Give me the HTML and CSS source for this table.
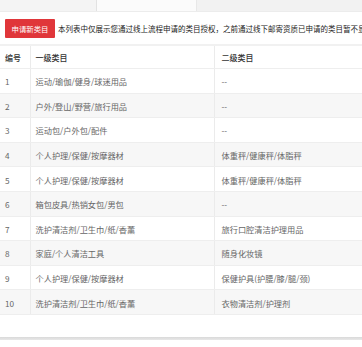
FILE: index.html
```html
<!DOCTYPE html>
<html lang="zh">
<head>
<meta charset="utf-8">
<link rel="stylesheet" href="styles.css">
</head>
<body>
<div class="page">
  <div class="topstrip">
    <div class="seg seg-a"></div>
    <div class="seg seg-b"></div>
    <div class="seg seg-c"></div>
  </div>
  <div class="toolbar">
    <button class="btn-apply">申请新类目</button>
    <span class="desc">本列表中仅展示您通过线上流程申请的类目授权，之前通过线下邮寄资质已申请的类目暂不显示</span>
  </div>
  <table class="cat-table">
    <thead>
      <tr><th class="c-no">编号</th><th class="c-l1">一级类目</th><th class="c-l2">二级类目</th></tr>
    </thead>
    <tbody>
      <tr><td class="c-no">1</td><td class="c-l1">运动/瑜伽/健身/球迷用品</td><td class="c-l2">--</td></tr>
      <tr><td class="c-no">2</td><td class="c-l1">户外/登山/野营/旅行用品</td><td class="c-l2">--</td></tr>
      <tr><td class="c-no">3</td><td class="c-l1">运动包/户外包/配件</td><td class="c-l2">--</td></tr>
      <tr><td class="c-no">4</td><td class="c-l1">个人护理/保健/按摩器材</td><td class="c-l2">体重秤/健康秤/体脂秤</td></tr>
      <tr><td class="c-no">5</td><td class="c-l1">个人护理/保健/按摩器材</td><td class="c-l2">体重秤/健康秤/体脂秤</td></tr>
      <tr><td class="c-no">6</td><td class="c-l1">箱包皮具/热销女包/男包</td><td class="c-l2">--</td></tr>
      <tr><td class="c-no">7</td><td class="c-l1">洗护清洁剂/卫生巾/纸/香薰</td><td class="c-l2">旅行口腔清洁护理用品</td></tr>
      <tr><td class="c-no">8</td><td class="c-l1">家庭/个人清洁工具</td><td class="c-l2">随身化妆镜</td></tr>
      <tr><td class="c-no">9</td><td class="c-l1">个人护理/保健/按摩器材</td><td class="c-l2">保健护具(护腰/膝/腿/颈)</td></tr>
      <tr><td class="c-no">10</td><td class="c-l1">洗护清洁剂/卫生巾/纸/香薰</td><td class="c-l2">衣物清洁剂/护理剂</td></tr>
    </tbody>
  </table>
  <div class="footer-gap"></div>
  <div class="footer-bar"></div>
</div>
</body>
</html>
```
FILE: styles.css
```css
html, body {
  margin: 0;
  padding: 0;
  background: #fff;
}
body {
  font-family: "Noto Sans CJK SC", "Noto Sans", sans-serif;
  overflow: hidden;
}
.page {
  width: 362px;
  overflow: hidden;
}
.topstrip {
  display: flex;
  height: 11px;
  border-bottom: 1px solid #ececec;
}
.seg-a {
  width: 96px;
  background: #f4f4f4;
  border-right: 1px solid #e2e2e2;
}
.seg-b {
  width: 99px;
  background: #fbfbfb;
}
.seg-c {
  flex: 1;
  background: #f2f2f2;
  border-left: 1px solid #e8e8e8;
}
.toolbar {
  display: flex;
  align-items: center;
  height: 19px;
  margin-top: 7px;
  padding-left: 5px;
  white-space: nowrap;
}
.btn-apply {
  flex: none;
  width: 50px;
  height: 19px;
  padding: 0;
  border: none;
  border-radius: 1px;
  background: #e0363a;
  color: #fff;
  font-family: inherit;
  font-size: 7.4px;
  line-height: 19px;
}
.desc {
  margin-left: 3px;
  font-size: 7.5px;
  color: #222;
}
.cat-table {
  margin-top: 6px;
  width: 362px;
  border-collapse: collapse;
  table-layout: fixed;
  border-top: 2px solid #f1f1f1;
}
.cat-table th,
.cat-table td {
  height: 24.6px;
  padding: 0 0 0 5px;
  text-align: left;
  vertical-align: middle;
  border-bottom: 1px solid #eeeeee;
  white-space: nowrap;
  box-sizing: border-box;
}
.cat-table th {
  font-size: 8px;
  font-weight: 500;
  color: #333;
  height: 23.5px;
}
.cat-table td {
  font-size: 8.2px;
  color: #666;
  padding-top: 1px;
}
.cat-table tbody tr:nth-child(even) td {
  background: #f7f7f7;
}
.c-no {
  width: 30px;
}
.c-l1 {
  width: 184px;
  border-left: 1px solid #ebebeb;
}
.c-l2 {
  border-left: 1px solid #ebebeb;
  padding-left: 7px !important;
}
.footer-gap {
  height: 22px;
}
.footer-bar {
  height: 3px;
  background: linear-gradient(#d9d9d9, #e8e8e8);
}
```
